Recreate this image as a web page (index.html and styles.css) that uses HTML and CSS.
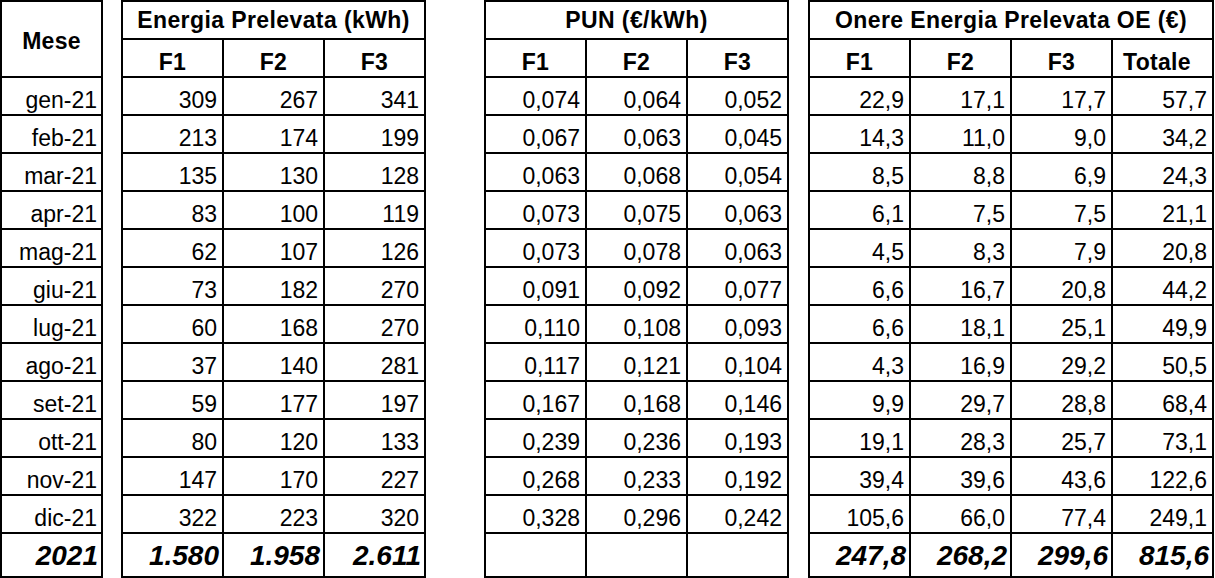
FILE: index.html
```html
<!DOCTYPE html>
<html lang="it">
<head>
<meta charset="utf-8">
<title>Onere Energia Prelevata 2021</title>
<link rel="stylesheet" href="styles.css">
</head>
<body>
<div class="sheet">
  <div class="tbl t1 gap-s">
    <div class="c h-mese">Mese</div>
    <div class="c lbl">gen-21</div>
    <div class="c lbl">feb-21</div>
    <div class="c lbl">mar-21</div>
    <div class="c lbl">apr-21</div>
    <div class="c lbl">mag-21</div>
    <div class="c lbl">giu-21</div>
    <div class="c lbl">lug-21</div>
    <div class="c lbl">ago-21</div>
    <div class="c lbl">set-21</div>
    <div class="c lbl">ott-21</div>
    <div class="c lbl">nov-21</div>
    <div class="c lbl">dic-21</div>
    <div class="c tot">2021</div>
  </div>

  <div class="tbl t3 gap-l">
    <div class="c h-title span3">Energia Prelevata (kWh)</div>
    <div class="c h-sub">F1</div><div class="c h-sub">F2</div><div class="c h-sub">F3</div>
    <div class="c num">309</div><div class="c num">267</div><div class="c num">341</div>
    <div class="c num">213</div><div class="c num">174</div><div class="c num">199</div>
    <div class="c num">135</div><div class="c num">130</div><div class="c num">128</div>
    <div class="c num">83</div><div class="c num">100</div><div class="c num">119</div>
    <div class="c num">62</div><div class="c num">107</div><div class="c num">126</div>
    <div class="c num">73</div><div class="c num">182</div><div class="c num">270</div>
    <div class="c num">60</div><div class="c num">168</div><div class="c num">270</div>
    <div class="c num">37</div><div class="c num">140</div><div class="c num">281</div>
    <div class="c num">59</div><div class="c num">177</div><div class="c num">197</div>
    <div class="c num">80</div><div class="c num">120</div><div class="c num">133</div>
    <div class="c num">147</div><div class="c num">170</div><div class="c num">227</div>
    <div class="c num">322</div><div class="c num">223</div><div class="c num">320</div>
    <div class="c tot">1.580</div><div class="c tot">1.958</div><div class="c tot">2.611</div>
  </div>

  <div class="tbl t3 gap-s">
    <div class="c h-title span3">PUN (€/kWh)</div>
    <div class="c h-sub">F1</div><div class="c h-sub">F2</div><div class="c h-sub">F3</div>
    <div class="c num">0,074</div><div class="c num">0,064</div><div class="c num">0,052</div>
    <div class="c num">0,067</div><div class="c num">0,063</div><div class="c num">0,045</div>
    <div class="c num">0,063</div><div class="c num">0,068</div><div class="c num">0,054</div>
    <div class="c num">0,073</div><div class="c num">0,075</div><div class="c num">0,063</div>
    <div class="c num">0,073</div><div class="c num">0,078</div><div class="c num">0,063</div>
    <div class="c num">0,091</div><div class="c num">0,092</div><div class="c num">0,077</div>
    <div class="c num">0,110</div><div class="c num">0,108</div><div class="c num">0,093</div>
    <div class="c num">0,117</div><div class="c num">0,121</div><div class="c num">0,104</div>
    <div class="c num">0,167</div><div class="c num">0,168</div><div class="c num">0,146</div>
    <div class="c num">0,239</div><div class="c num">0,236</div><div class="c num">0,193</div>
    <div class="c num">0,268</div><div class="c num">0,233</div><div class="c num">0,192</div>
    <div class="c num">0,328</div><div class="c num">0,296</div><div class="c num">0,242</div>
    <div class="c tot"></div><div class="c tot"></div><div class="c tot"></div>
  </div>

  <div class="tbl t4">
    <div class="c h-title span4">Onere Energia Prelevata OE (€)</div>
    <div class="c h-sub">F1</div><div class="c h-sub">F2</div><div class="c h-sub">F3</div><div class="c h-sub h-left">Totale</div>
    <div class="c num">22,9</div><div class="c num">17,1</div><div class="c num">17,7</div><div class="c num">57,7</div>
    <div class="c num">14,3</div><div class="c num">11,0</div><div class="c num">9,0</div><div class="c num">34,2</div>
    <div class="c num">8,5</div><div class="c num">8,8</div><div class="c num">6,9</div><div class="c num">24,3</div>
    <div class="c num">6,1</div><div class="c num">7,5</div><div class="c num">7,5</div><div class="c num">21,1</div>
    <div class="c num">4,5</div><div class="c num">8,3</div><div class="c num">7,9</div><div class="c num">20,8</div>
    <div class="c num">6,6</div><div class="c num">16,7</div><div class="c num">20,8</div><div class="c num">44,2</div>
    <div class="c num">6,6</div><div class="c num">18,1</div><div class="c num">25,1</div><div class="c num">49,9</div>
    <div class="c num">4,3</div><div class="c num">16,9</div><div class="c num">29,2</div><div class="c num">50,5</div>
    <div class="c num">9,9</div><div class="c num">29,7</div><div class="c num">28,8</div><div class="c num">68,4</div>
    <div class="c num">19,1</div><div class="c num">28,3</div><div class="c num">25,7</div><div class="c num">73,1</div>
    <div class="c num">39,4</div><div class="c num">39,6</div><div class="c num">43,6</div><div class="c num">122,6</div>
    <div class="c num">105,6</div><div class="c num">66,0</div><div class="c num">77,4</div><div class="c num">249,1</div>
    <div class="c tot">247,8</div><div class="c tot">268,2</div><div class="c tot">299,6</div><div class="c tot">815,6</div>
  </div>
</div>
</body>
</html>
```

FILE: styles.css
```css
html, body {
  margin: 0;
  padding: 0;
  background: #fff;
}

body {
  font-family: "Liberation Sans", Arial, sans-serif;
  color: #000;
  width: 1215px;
  height: 578px;
  overflow: hidden;
}

.sheet {
  display: flex;
  align-items: flex-start;
}

.tbl {
  display: grid;
  gap: 2px;
  padding: 2px;
  background: #000;
  grid-template-rows: 36px 36px repeat(12, 36px) 42px;
}

.t1 { grid-template-columns: 99px; }
.t3 { grid-template-columns: repeat(3, 99px); }
.t4 { grid-template-columns: repeat(4, 99px); }

.gap-s { margin-right: 18px; }
.gap-l { margin-right: 58px; }
.t3.gap-s { margin-right: 19px; }

.c {
  background: #fff;
  display: flex;
  align-items: flex-end;
  justify-content: flex-end;
  padding: 0 5px 3px 0;
  font-size: 23px;
  line-height: 22px;
  white-space: nowrap;
  overflow: hidden;
}

.lbl {
  padding-right: 4px;
}

.h-mese {
  grid-row: span 2;
  font-weight: bold;
  justify-content: center;
  align-items: center;
  padding: 4px 0 0 0;
  letter-spacing: 0.3px;
}

.h-title {
  font-weight: bold;
  justify-content: center;
  align-items: center;
  padding: 0;
  letter-spacing: 0.4px;
}

.span3 { grid-column: span 3; }
.span4 { grid-column: span 4; }

.h-sub {
  font-weight: bold;
  justify-content: center;
  padding: 0 0 3px 0;
  letter-spacing: 0.3px;
}

.h-left {
  justify-content: flex-start;
  padding-left: 10px;
}

.tot {
  font-weight: bold;
  font-style: italic;
  font-size: 28px;
  line-height: 28px;
  align-items: center;
  padding: 2px 3px 0 0;
}
```
